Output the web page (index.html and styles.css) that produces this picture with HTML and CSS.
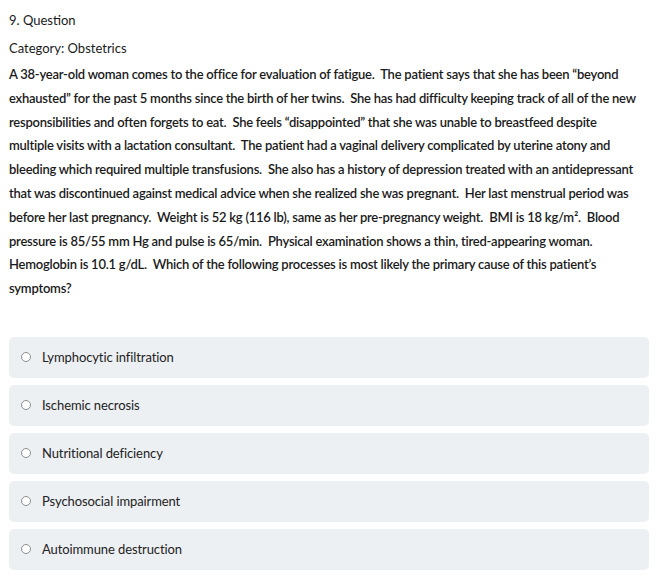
FILE: index.html
```html
<!DOCTYPE html>
<html>
<head>
<meta charset="utf-8">
<link rel="stylesheet" href="styles.css">
</head>
<body>
<div class="page">
  <div class="qnum">9. Question</div>
  <div class="category">Category: Obstetrics</div>
  <p class="stem">A 38-year-old woman comes to the office for evaluation of fatigue.&nbsp; The patient says that she has been “beyond exhausted” for the past 5 months since the birth of her twins.&nbsp; She has had difficulty keeping track of all of the new responsibilities and often forgets to eat.&nbsp; She feels “disappointed” that she was unable to breastfeed despite multiple visits with a lactation consultant.&nbsp; The patient had a vaginal delivery complicated by uterine atony and bleeding which required multiple transfusions.&nbsp; She also has a history of depression treated with an antidepressant that was discontinued against medical advice when she realized she was pregnant.&nbsp; Her last menstrual period was before her last pregnancy.&nbsp; Weight is 52 kg (116 lb), same as her pre-pregnancy weight.&nbsp; BMI is 18 kg/m².&nbsp; Blood pressure is 85/55 mm Hg and pulse is 65/min.&nbsp; Physical examination shows a thin, tired-appearing woman.&nbsp; Hemoglobin is 10.1 g/dL.&nbsp; Which of the following processes is most likely the primary cause of this patient’s symptoms?</p>
  <div class="options">
    <label class="option"><span class="radio"></span><span class="label">Lymphocytic infiltration</span></label>
    <label class="option"><span class="radio"></span><span class="label">Ischemic necrosis</span></label>
    <label class="option"><span class="radio"></span><span class="label">Nutritional deficiency</span></label>
    <label class="option"><span class="radio"></span><span class="label">Psychosocial impairment</span></label>
    <label class="option"><span class="radio"></span><span class="label">Autoimmune destruction</span></label>
  </div>
</div>
</body>
</html>
```
FILE: styles.css
```css
html, body {
  margin: 0;
  padding: 0;
  background: #ffffff;
}
body {
  font-family: "Lato", "Liberation Sans", sans-serif;
  color: #1a1a1a;
  font-size: 13px;
}
.page {
  padding: 9px 12px 0 9px;
}
.qnum {
  line-height: 23px;
  margin-top: 0;
}
.category {
  line-height: 23px;
  margin-top: 5px;
}
.stem {
  margin: 3px 0 0 0;
  max-width: 631px;
  line-height: 23.8px;
  font-weight: 600;
  letter-spacing: -0.24px;
}
.options {
  display: flex;
  flex-direction: column;
  gap: 7px;
  margin-top: 36px;
}
.option {
  display: flex;
  align-items: center;
  height: 41px;
  background: #edf0f3;
  border-radius: 5px;
  padding-left: 12px;
}
.radio {
  width: 8px;
  height: 8px;
  border: 1px solid #8f8f8f;
  border-radius: 50%;
  background: #fff;
  box-sizing: content-box;
}
.label {
  margin-left: 11px;
  font-size: 13px;
  letter-spacing: -0.1px;
  color: #222;
}
```
